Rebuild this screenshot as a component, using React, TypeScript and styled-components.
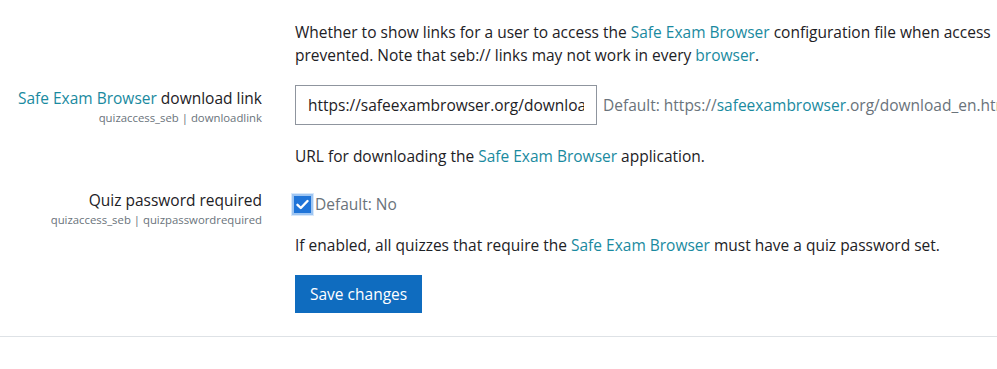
import React from "react";
import styled, { createGlobalStyle } from "styled-components";

const Global = createGlobalStyle`
  html, body { margin: 0; padding: 0; background: #fff; overflow: hidden; }
  body { font-family: "Open Sans", "Liberation Sans", sans-serif; font-size: 15.5px; color: #1d2125; }
`;

const Page = styled.div`
  width: 997px;
  height: 369px;
  overflow: hidden;
  position: relative;
`;

const Form = styled.div`
  padding-top: 21px;
  display: flex;
  flex-direction: column;
`;

const Row = styled.div<{ $mb?: number }>`
  display: grid;
  grid-template-columns: 262px 760px;
  column-gap: 33px;
  margin-bottom: ${(p) => p.$mb ?? 0}px;
`;

const LabelCol = styled.div<{ $pt?: number }>`
  text-align: right;
  padding-top: ${(p) => p.$pt ?? 0}px;
`;

const LabelText = styled.div`
  font-size: 15.5px;
  line-height: 22px;
  color: #1d2125;
  white-space: nowrap;
`;

const ShortName = styled.div`
  font-size: 11.35px;
  line-height: 18px;
  color: #6a737b;
  white-space: nowrap;
`;

const Content = styled.div`
  display: flex;
  flex-direction: column;
`;

const Desc = styled.div<{ $mt?: number }>`
  line-height: 23px;
  margin-top: ${(p) => p.$mt ?? 0}px;
`;

const Link = styled.span`
  color: #1a8aa0;
`;

const InputLine = styled.div`
  display: flex;
  align-items: center;
  white-space: nowrap;
`;

const TextInput = styled.input`
  box-sizing: border-box;
  width: 302px;
  height: 40px;
  padding: 0 12px;
  border: 1px solid #8f959e;
  border-radius: 0;
  font: inherit;
  font-size: 15.5px;
  color: #1d2125;
  background: #fff;
  flex-shrink: 0;
`;

const DefaultText = styled.span<{ $ml?: number }>`
  color: #6a737b;
  margin-left: ${(p) => p.$ml ?? 6}px;
`;

const CheckLine = styled.div`
  display: flex;
  align-items: center;
  height: 22px;
  margin-top: 5px;
  margin-left: -3px;
`;

const CheckBox = styled.span`
  box-sizing: border-box;
  width: 21px;
  height: 21px;
  border: 2px solid #9ec5f2;
  background: #1f74d8;
  display: inline-flex;
  align-items: center;
  justify-content: center;
  outline: 1px solid #d7e8fb;
`;

const Button = styled.button`
  align-self: flex-start;
  margin-top: 18px;
  height: 38px;
  padding: 0 15px;
  border: none;
  border-radius: 0;
  background: #0f6cbf;
  color: #fff;
  font: inherit;
  font-size: 15.5px;
`;

const Rule = styled.hr`
  margin: 23px 0 0;
  border: none;
  border-top: 1px solid #dee2e6;
  width: 100%;
`;

export default function App() {
  return (
    <Page>
      <Global />
      <Form>
        <Row $mb={18}>
          <div />
          <Desc>
            Whether to show links for a user to access the <Link>Safe Exam Browser</Link> configuration file when access
            <br />
            prevented. Note that seb:// links may not work in every <Link>browser</Link>.
          </Desc>
        </Row>
        <Row $mb={20}>
          <LabelCol $pt={2}>
            <LabelText>
              <Link>Safe Exam Browser</Link> download link
            </LabelText>
            <ShortName>quizaccess_seb | downloadlink</ShortName>
          </LabelCol>
          <Content>
            <InputLine>
              <TextInput readOnly value="https://safeexambrowser.org/download_en.html" />
              <DefaultText>
                Default: https://<Link>safeexambrowser</Link>.org/download_en.html
              </DefaultText>
            </InputLine>
            <Desc $mt={20}>
              URL for downloading the <Link>Safe Exam Browser</Link> application.
            </Desc>
          </Content>
        </Row>
        <Row>
          <LabelCol $pt={1}>
            <LabelText>Quiz password required</LabelText>
            <ShortName>quizaccess_seb | quizpasswordrequired</ShortName>
          </LabelCol>
          <Content>
            <CheckLine>
              <CheckBox>
                <svg width="13" height="11" viewBox="0 0 13 11">
                  <path d="M1.5 5.8 L4.8 9 L11.5 2" fill="none" stroke="#fff" strokeWidth="2.4" strokeLinecap="round" strokeLinejoin="round" />
                </svg>
              </CheckBox>
              <DefaultText $ml={2}>Default: No</DefaultText>
            </CheckLine>
            <Desc $mt={19}>
              If enabled, all quizzes that require the <Link>Safe Exam Browser</Link> must have a quiz password set.
            </Desc>
            <Button>Save changes</Button>
          </Content>
        </Row>
        <Rule />
      </Form>
    </Page>
  );
}
